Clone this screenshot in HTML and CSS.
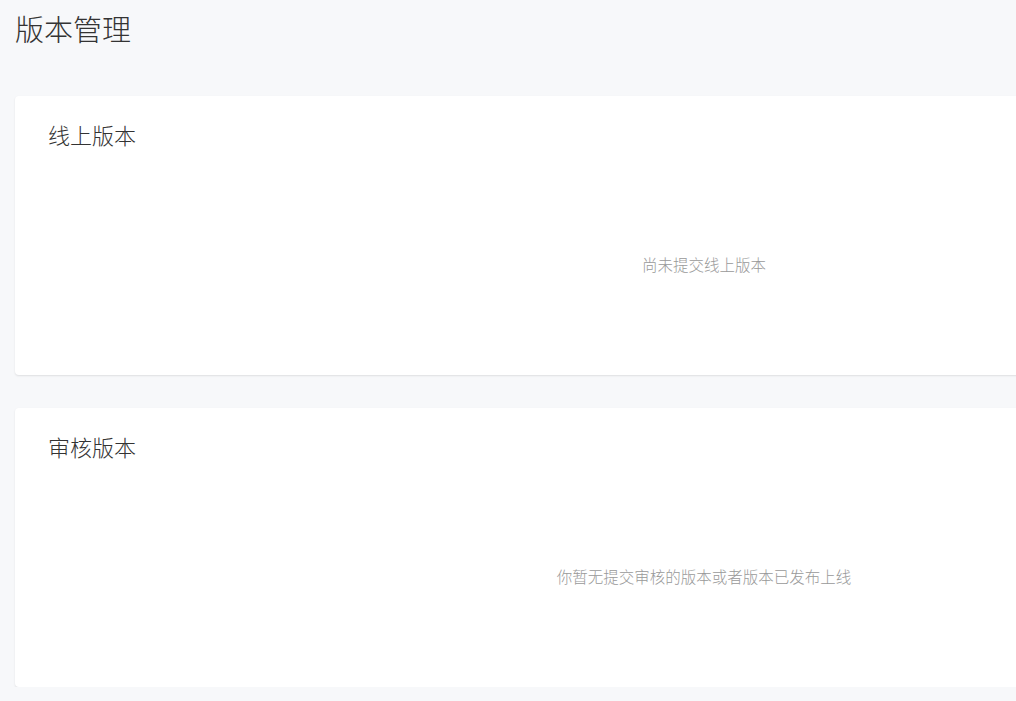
FILE: index.html
```html
<!DOCTYPE html>
<html>
<head>
  <meta charset="utf-8">
  <title>版本管理</title>
  <link rel="stylesheet" href="styles.css">
</head>
<body>
  <div class="page">
    <h2 class="page-title">版本管理</h2>

    <div class="card">
      <h3 class="card-title">线上版本</h3>
      <div class="empty">尚未提交线上版本</div>
    </div>

    <div class="card">
      <h3 class="card-title">审核版本</h3>
      <div class="empty">你暂无提交审核的版本或者版本已发布上线</div>
    </div>
  </div>
</body>
</html>
```

FILE: styles.css
```css
html, body {
  margin: 0;
  padding: 0;
  overflow: hidden;
}

body {
  font-family: "Noto Sans CJK SC", "Noto Sans", sans-serif;
  background-color: #f7f8fa;
  color: #333;
}

.page {
  padding: 0 0 0 15px;
  width: 1378px;
}

.page-title {
  margin: 0;
  font-size: 29px;
  font-weight: 300;
  line-height: 56px;
  color: #333;
}

.card {
  background: #fff;
  border-radius: 4px;
  box-shadow: 0 1px 2px rgba(0, 0, 0, 0.1);
  height: 279px;
  margin-top: 40px;
  padding: 0 33px;
  box-sizing: border-box;
  display: flex;
  flex-direction: column;
}

.card + .card {
  margin-top: 33px;
}

.card-title {
  margin: 0;
  padding-top: 23px;
  font-size: 22px;
  font-weight: 300;
  line-height: 30px;
  color: #333;
}

.empty {
  flex: 1;
  display: flex;
  align-items: center;
  justify-content: center;
  padding-top: 4px;
  font-size: 15.5px;
  font-weight: 300;
  color: #999;
}
```
